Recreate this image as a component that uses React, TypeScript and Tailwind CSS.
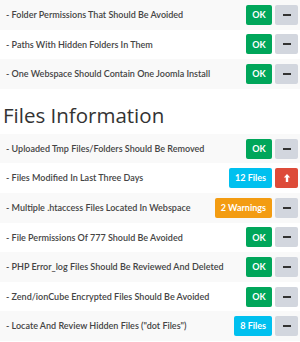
import React from "react";

type Status =
  | { kind: "ok" }
  | { kind: "info"; label: string }
  | { kind: "warn"; label: string };

interface CheckRow {
  label: string;
  status: Status;
  alert?: boolean;
}

const folderChecks: CheckRow[] = [
  { label: "- Folder Permissions That Should Be Avoided", status: { kind: "ok" } },
  { label: "- Paths With Hidden Folders In Them", status: { kind: "ok" } },
  { label: "- One Webspace Should Contain One Joomla Install", status: { kind: "ok" } },
];

const fileChecks: CheckRow[] = [
  { label: "- Uploaded Tmp Files/Folders Should Be Removed", status: { kind: "ok" } },
  { label: "- Files Modified In Last Three Days", status: { kind: "info", label: "12 Files" }, alert: true },
  { label: "- Multiple .htaccess Files Located In Webspace", status: { kind: "warn", label: "2 Warnings" } },
  { label: "- File Permissions Of 777 Should Be Avoided", status: { kind: "ok" } },
  { label: "- PHP Error_log Files Should Be Reviewed And Deleted", status: { kind: "ok" } },
  { label: "- Zend/ionCube Encrypted Files Should Be Avoided", status: { kind: "ok" } },
  { label: "- Locate And Review Hidden Files (\"dot Files\")", status: { kind: "info", label: "8 Files" } },
];

const StatusBadge = ({ status }: { status: Status }) => {
  if (status.kind === "ok") {
    return (
      <span className="flex h-[20px] w-[26px] items-center justify-center rounded-[2px] bg-[#00a65a] text-[9px] font-bold text-white">
        OK
      </span>
    );
  }
  const bg = status.kind === "info" ? "bg-[#00c0ef]" : "bg-[#f39c12]";
  return (
    <span className={`flex h-[20px] items-center justify-center rounded-[2px] px-[6px] text-[9px] font-bold text-white ${bg}`}>
      {status.label}
    </span>
  );
};

const ToggleButton = ({ alert }: { alert?: boolean }) => {
  if (alert) {
    return (
      <span className="flex h-[20px] w-[23px] items-center justify-center rounded-[2px] bg-[#dd4b39]">
        <svg width="8" height="10" viewBox="0 0 8 10" fill="none">
          <path d="M4 1 L7.2 4.4 H5.2 V9 H2.8 V4.4 H0.8 Z" fill="#fff" />
        </svg>
      </span>
    );
  }
  return (
    <span className="flex h-[20px] w-[23px] items-center justify-center rounded-[2px] bg-[#d2d6de]">
      <span className="block h-[2px] w-[8px] bg-[#333]" />
    </span>
  );
};

const Row = ({ row, striped }: { row: CheckRow; striped: boolean }) => (
  <div
    className={`flex h-[29.6px] items-center justify-between pl-[6px] pr-[2px] ${
      striped ? "bg-[#f9f9f9]" : "bg-white"
    }`}
  >
    <span className="text-[9px] font-semibold text-[#444]">{row.label}</span>
    <div className="flex items-center gap-[3px]">
      <StatusBadge status={row.status} />
      <ToggleButton alert={row.alert} />
    </div>
  </div>
);

export default function App() {
  return (
    <div
      className="h-[342px] w-[300px] overflow-hidden bg-white"
      style={{ fontFamily: 'Lato, "Open Sans", sans-serif' }}
    >
      {folderChecks.map((row, i) => (
        <Row key={row.label} row={row} striped={i % 2 === 0} />
      ))}
      <div className="h-[45px] pl-[3px] pt-[15px]">
        <h2
          className="text-[20.5px] leading-[1.1] font-normal text-[#333]"
          style={{ fontFamily: '"Open Sans", sans-serif' }}
        >
          Files Information
        </h2>
      </div>
      {fileChecks.map((row, i) => (
        <Row key={row.label} row={row} striped={i % 2 === 0} />
      ))}
    </div>
  );
}
